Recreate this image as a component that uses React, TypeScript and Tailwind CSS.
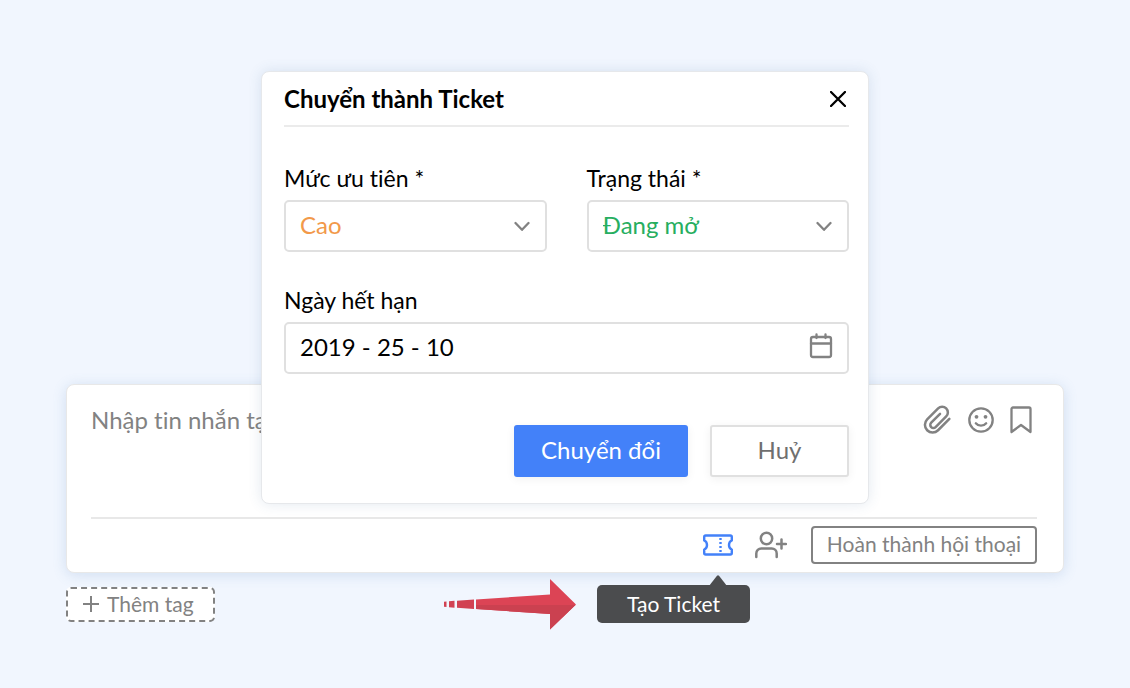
import React from "react";

const ChevronDown = () => (
  <svg aria-hidden="true" viewBox="0 0 16 12" className="pointer-events-none absolute right-[17px] h-3 w-4 fill-none stroke-[#828282] stroke-[2.3]">
    <path d="M1.500 3 8 9.800 14.500 3" strokeLinecap="round" strokeLinejoin="round" />
  </svg>
);

const CloseIcon = () => (
  <svg aria-hidden="true" viewBox="0 0 16 16" className="size-4 fill-none stroke-black stroke-[2.3]">
    <path d="m1 1 14 14M15 1 1 15" strokeLinecap="round" />
  </svg>
);

const CalendarIcon = () => (
  <svg aria-hidden="true" viewBox="0 0 24 26" className="h-[26px] w-6 fill-none stroke-[#828282] stroke-[2.3]">
    <rect x="2" y="4" width="20" height="20" rx="2" />
    <path d="M2 10.500h20M7.500 1.500V5M16.500 1.500V5" strokeLinecap="round" />
  </svg>
);

const PaperclipIcon = () => (
  <svg aria-hidden="true" viewBox="0 0 30 30" className="size-[30px] overflow-visible fill-none stroke-[#828282] stroke-[2.5]">
    <path
      d="M8 -9.500V6.500a7.700 7.700 0 0 1-15.400 0V-9a5.700 5.700 0 0 1 11.400 0V6a3.100 3.100 0 0 1-6.200 0V-6.500"
      transform="translate(15 15) rotate(45)"
      strokeLinecap="round"
    />
  </svg>
);

const SmileIcon = () => (
  <svg aria-hidden="true" viewBox="0 0 26 26" className="size-[26px] fill-none stroke-[#828282] stroke-[2.3]">
    <circle cx="13" cy="13" r="11.700" />
    <path d="M7.800 16.300c2.600 3.200 7.800 3.200 10.400 0" strokeLinecap="round" />
    <circle cx="8.500" cy="9.800" r="1.900" className="fill-[#828282] stroke-none" />
    <circle cx="17.500" cy="9.800" r="1.900" className="fill-[#828282] stroke-none" />
  </svg>
);

const BookmarkIcon = () => (
  <svg aria-hidden="true" viewBox="0 0 22 28" className="h-7 w-[22px] fill-none stroke-[#828282] stroke-[2.3]">
    <path d="M1.500 26V3a1.500 1.500 0 0 1 1.500-1.500h16A1.500 1.500 0 0 1 20.500 3v23L11 19Z" strokeLinejoin="round" />
  </svg>
);

const TicketIcon = () => (
  <svg aria-hidden="true" viewBox="0 0 30 22" className="h-[22px] w-[30px] fill-none stroke-[#4381f9] stroke-[2.4]">
    <path
      d="M1.200 3v3.500c1.800.7 2.800 2.300 2.800 4.500s-1 3.800-2.800 4.500V19c0 .9.600 1.500 1.500 1.500h24.600c.9 0 1.500-.6 1.500-1.500v-3.500C27 14.800 26 13.200 26 11s1-3.800 2.800-4.500V3c0-.9-.6-1.500-1.500-1.500H2.700c-.9 0-1.500.6-1.500 1.500Z"
      strokeLinejoin="round"
    />
    <path d="M17.500 4v15" strokeDasharray="2 2" />
  </svg>
);

const UserPlusIcon = () => (
  <svg aria-hidden="true" viewBox="0 0 32 28" className="h-7 w-8 fill-none stroke-[#828282] stroke-[2.5]">
    <circle cx="11.500" cy="7.500" r="5.700" />
    <path d="M1.300 26v-3.500a5 5 0 0 1 5-5h10.400a5 5 0 0 1 5 5V26M26.500 8.500v9M22 13h9" strokeLinecap="round" />
  </svg>
);

const PlusIcon = () => (
  <svg aria-hidden="true" viewBox="0 0 16 16" className="size-4 fill-none stroke-[#828282] stroke-2">
    <path d="M8 0v16M0 8h16" />
  </svg>
);

const PointerArrow = () => (
  <svg aria-hidden="true" viewBox="0 0 133 52" className="h-[52px] w-[133px] shrink-0">
    <path d="m33 21.500 74-5V1l26 25.500-26 25V36L33 31Z" fill="#dc4455" />
    <path d="M33 27h99.500L107 51.500V36L33 31Z" fill="#cb4150" />
    <path d="m14 22.700 17-1.300v9.700l-17-1.300ZM6 23.200l5.500-.5v7.100L6 29.300ZM1 23.700l2.500-.2v5.500l-2.500-.2Z" fill="#d14253" />
  </svg>
);

type PickerProps = { id: string; label: string; tone: string; options: string[] };

const Picker = ({ id, label, tone, options }: PickerProps) => (
  <div className="flex flex-col gap-2">
    <label htmlFor={id} className="text-[23px] leading-7">{label}</label>
    <div className="relative flex items-center">
      <select id={id} className={`h-[52px] w-full appearance-none rounded-[5px] border-2 border-[#e0e0e0] bg-white px-3.5 pb-[2px] text-[24px] leading-8 ${tone}`}>
        {options.map((option) => <option key={option}>{option}</option>)}
      </select>
      <ChevronDown />
    </div>
  </div>
);

const TicketDialog = () => (
  <form
    role="dialog"
    aria-labelledby="dialog-title"
    onSubmit={(event) => event.preventDefault()}
    className="z-10 col-start-1 row-start-1 w-full max-w-[608px] self-start justify-self-center rounded-lg border border-[#e6e8eb] bg-white pr-[19px] pb-[26px] pl-[22px] text-black shadow-[0_0_14px_rgba(60,100,150,0.14)]"
  >
    <header className="flex h-[55px] items-center justify-between border-b-2 border-[#ebebeb]">
      <h2 id="dialog-title" className="text-[24px] leading-8 font-bold">Chuyển thành Ticket</h2>
      <button type="button" aria-label="Đóng" className="p-1 pr-[3px]"><CloseIcon /></button>
    </header>
    <div className="mt-[37px] grid grid-cols-2 gap-x-10">
      <Picker id="priority" label="Mức ưu tiên *" tone="text-[#f2994a]" options={["Cao"]} />
      <Picker id="status" label="Trạng thái *" tone="text-[#27ae60]" options={["Đang mở"]} />
    </div>
    <div className="mt-[34px] flex flex-col gap-2">
      <label htmlFor="due" className="text-[23px] leading-7">Ngày hết hạn</label>
      <div className="relative flex items-center">
        <input id="due" type="text" defaultValue="2019 - 25 - 10" className="h-[52px] w-full rounded-[5px] border-2 border-[#e0e0e0] bg-white px-3.5 pb-1 text-[24px] leading-8" />
        <span className="pointer-events-none absolute right-4 pb-1"><CalendarIcon /></span>
      </div>
    </div>
    <div className="mt-[51px] flex justify-end gap-[22px]">
      <button type="submit" className="h-[52px] w-[174px] rounded-[3px] bg-[#4381f9] pb-[2px] text-[24px] leading-8 text-white shadow-[0_2px_10px_rgba(0,0,0,0.06)]">Chuyển đổi</button>
      <button type="button" className="h-[52px] w-[139px] rounded-[3px] border-2 border-[#e0e0e0] bg-white pb-[2px] text-[24px] leading-8 text-[#6f6f6f] shadow-[0_2px_10px_rgba(0,0,0,0.06)]">Huỷ</button>
    </div>
  </form>
);

const TicketTooltip = () => (
  <div className="absolute top-[44px] -right-[17px] flex items-center gap-[21px]">
    <PointerArrow />
    <div role="tooltip" className="relative flex h-[38px] w-[153px] items-center justify-center rounded-[5px] bg-[#4b4c4e] text-[21px] leading-6 text-white">
      Tạo Ticket
      <svg aria-hidden="true" viewBox="0 0 18 11" className="absolute -top-[10px] right-[23px] h-[11px] w-[18px] fill-[#4b4c4e]">
        <path d="M0 11 8 .8q1-1.200 2 0L18 11Z" />
      </svg>
    </div>
  </div>
);

const Composer = () => (
  <section className="col-start-1 row-start-1 mt-[313px] flex flex-col self-start rounded-lg border border-[#e8e8e8] bg-white pr-[26px] pl-6 shadow-[0_2px_14px_rgba(80,130,190,0.2)]">
    <div className="flex items-start justify-between border-b-2 border-[#e8e8e8] pt-[19px]">
      <textarea aria-label="Tin nhắn" placeholder="Nhập tin nhắn tại đây" className="h-[113px] grow resize-none text-[24px] leading-8 text-[#828282] placeholder:text-[#828282] focus:outline-none" />
      <div className="flex h-8 items-center gap-4 pr-[5px]">
        <button type="button" aria-label="Đính kèm tệp"><PaperclipIcon /></button>
        <button type="button" aria-label="Biểu tượng cảm xúc"><SmileIcon /></button>
        <button type="button" aria-label="Lưu lại"><BookmarkIcon /></button>
      </div>
    </div>
    <div className="flex h-[53px] items-center justify-end pb-[2px]">
      <div className="relative mr-[22px] flex">
        <button type="button" aria-label="Tạo Ticket"><TicketIcon /></button>
        <TicketTooltip />
      </div>
      <button type="button" aria-label="Thêm thành viên" className="mr-6"><UserPlusIcon /></button>
      <button type="button" className="h-[38px] w-[226px] rounded-[4px] border-2 border-[#828282] pb-[2px] text-[21px] leading-6 text-[#828282]">Hoàn thành hội thoại</button>
    </div>
  </section>
);

export default function App() {
  return (
    <main className="min-h-screen bg-[#f1f6fe] px-[66px] pt-[71px] pb-16 font-['Lato','Noto_Sans',sans-serif] [font-variant-ligatures:no-common-ligatures]">
      <div className="grid">
        <TicketDialog />
        <Composer />
      </div>
      <button type="button" className="mt-3.5 flex h-[35px] w-[149px] items-center gap-2 rounded-[5px] border-2 border-dashed border-[#828282] bg-white pb-[2px] pl-[15px] text-[21px] leading-6 text-[#828282]">
        <PlusIcon />
        Thêm tag
      </button>
    </main>
  );
}
